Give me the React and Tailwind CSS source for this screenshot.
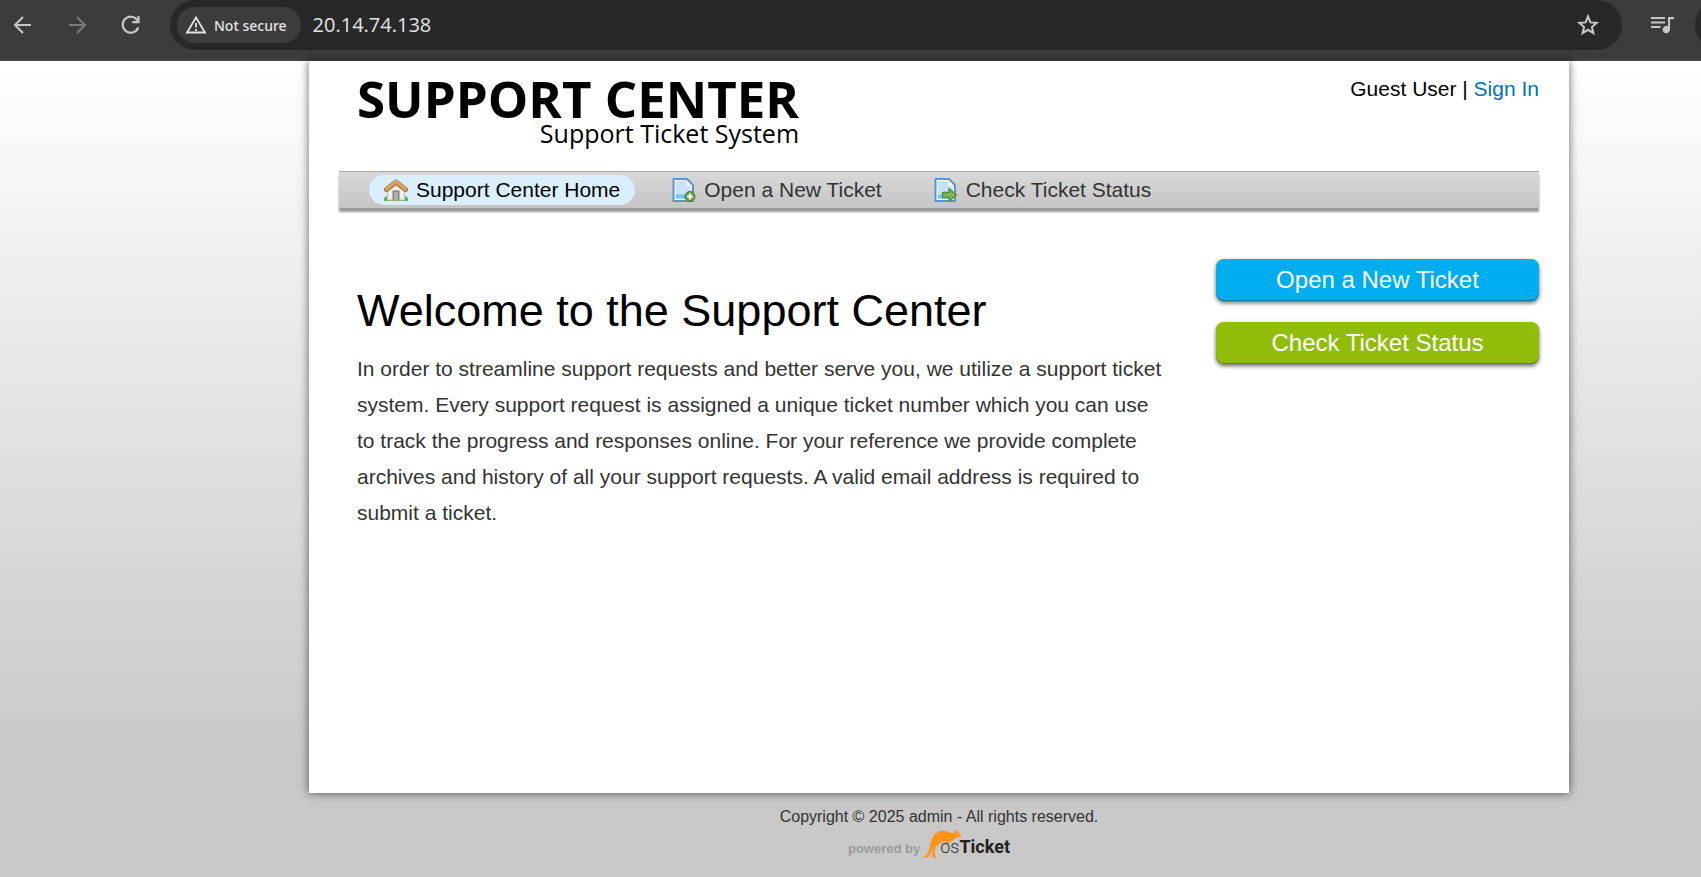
import React from "react";

function BackIcon({ flip }) {
  return (
    <svg width="20" height="20" viewBox="0 0 20 20" fill="none" stroke="currentColor" strokeWidth="2" className={flip ? "-scale-x-100" : ""}>
      <path d="M18 10H2M10 2L2 10l8 8" />
    </svg>
  );
}

function ReloadIcon() {
  return (
    <svg width="20" height="20" viewBox="0 0 20 20" fill="none" stroke="currentColor" strokeWidth="2.2">
      <path d="M16.500 5.500A8 8 0 1 0 17.200 12.500" />
      <path d="M17.500 1v6.200h-6.200" />
    </svg>
  );
}

function WarningIcon() {
  return (
    <svg width="22" height="20" viewBox="0 0 22 20" fill="none" stroke="currentColor" strokeWidth="1.800">
      <path d="M11 2.500L2 17.500h18z" />
      <path d="M11 8v4.500M11 14v2" />
    </svg>
  );
}

function StarIcon() {
  return (
    <svg width="24" height="24" viewBox="0 0 24 24" fill="none" stroke="currentColor" strokeWidth="2">
      <path d="M12 3.500l2.400 5.900 6.300.5-4.800 4.100 1.500 6.200-5.400-3.400-5.400 3.400 1.500-6.200-4.800-4.100 6.300-.5z" />
    </svg>
  );
}

function QueueIcon() {
  return (
    <svg width="24" height="18" viewBox="0 0 24 18" fill="currentColor">
      <path d="M0 1h14v2H0zM0 5.500h14v2H0zM0 10h9.500v2H0z" />
      <path d="M17 1h6v2.200h-4v10.300a3.700 3.700 0 1 1-2-3.200z" />
    </svg>
  );
}

function HomeIcon() {
  return (
    <svg width="24" height="24" viewBox="0 0 24 24">
      <path d="M0 20.500q2-4 6-2h12q4-2 6 2v2.500H0z" fill="#62ad58" />
      <path d="M3.500 12L12 4l8.500 8v10h-17z" fill="#f1ede7" stroke="#c9c1b6" />
      <path d="M8.500 12.500h7V22.500h-7z" fill="#858585" />
      <path d="M10 14h4v8.500h-4z" fill="#b0b0b0" />
      <path d="M2.500 11.500L12 4l9.500 7.500" fill="none" stroke="#a8763c" strokeWidth="5" strokeLinejoin="round" strokeLinecap="round" />
      <path d="M2.500 11L12 3.500l9.500 7.500" fill="none" stroke="#d9a566" strokeWidth="3.200" strokeLinejoin="round" strokeLinecap="round" />
    </svg>
  );
}

function PageShape() {
  return (
    <>
      <path d="M1.500 1h13.500l6 6v16H1.500z" fill="#fff" stroke="#5a93cf" strokeWidth="2" strokeLinejoin="round" />
      <path d="M3.500 3h11L19 8v13H3.500z" fill="#cbe1fa" />
      <path d="M14.500 2.500v5.500H20z" fill="#f6fbff" />
      <path d="M4 16.500h10v4H4z" fill="#72c4fa" />
    </>
  );
}

function NewTicketIcon() {
  return (
    <svg width="24" height="24" viewBox="0 0 24 24">
      <PageShape />
      <circle cx="18" cy="18.500" r="5" fill="#68a142" stroke="#447d25" />
      <path d="M18 15.500v6M15 18.500h6" stroke="#fff" strokeWidth="2.200" />
    </svg>
  );
}

function StatusIcon() {
  return (
    <svg width="24" height="24" viewBox="0 0 24 24">
      <PageShape />
      <path d="M8.500 14.500h6.500v-4l7.500 6.500-7.500 6.500v-4H8.500z" fill="#7fb558" stroke="#518f33" strokeWidth="1.300" strokeLinejoin="round" />
    </svg>
  );
}

function Kangaroo() {
  return (
    <svg width="40" height="30" viewBox="0 0 40 30" fill="#ff9419" className="absolute left-0 top-0">
      <path d="M.5 27.300C4.500 27.300 6 25 7 21 8.500 14.500 9.500 9 13 5 16.500 1.500 22 .8 26.500 3c2 1 4 1.300 5.800.5L33 2.800 33.200.8l1.500 1.400L35.500 0l.9 3.500 3 2.700-.7 1.600-4.200.6c-1.800 2-3.500 3-5.800 3.600L26.500 15l-3.200.2 1.700-2.500c-1.500.2-3 .1-4.500-.4-1.500 2.200-3.800 3-5.800 4.500-2 1.800-1.600 4.500-1.900 9.200l1.700 2.400-3.800.4c-1-3.500-.6-7 .3-11C9.600 22 8.500 28.500 3 28.700z" />
    </svg>
  );
}

const navItems = [
  { label: "Support Center Home", icon: HomeIcon, active: true },
  { label: "Open a New Ticket", icon: NewTicketIcon },
  { label: "Check Ticket Status", icon: StatusIcon },
];

function BrowserBar() {
  return (
    <div className="flex h-[61px] items-start overflow-hidden border-b border-[#4a4a4a] bg-[#3c3c3c] text-[#c7c7c7]">
      <div className="flex h-[50px] shrink-0 items-center gap-[34px] pl-[13px]">
        <button type="button" aria-label="Back"><BackIcon /></button>
        <button type="button" aria-label="Forward" className="text-[#7b7b7b]"><BackIcon flip /></button>
        <button type="button" aria-label="Reload"><ReloadIcon /></button>
      </div>
      <div className="ml-[29px] flex h-[50px] flex-1 items-center rounded-full bg-[#282828] pl-[7px] pr-[22px]">
        <button type="button" className="flex h-9 shrink-0 items-center gap-[7px] rounded-full bg-[#3c3c3c] pl-2 pr-[14px] font-['Noto_Sans',sans-serif] text-[14px] font-medium text-[#e3e3e3]">
          <WarningIcon />
          Not secure
        </button>
        <input
          type="text"
          aria-label="Address"
          defaultValue="20.14.74.138"
          className="ml-3 min-w-0 flex-1 bg-transparent font-['Open_Sans',sans-serif] text-[20px] text-[#e3e3e3] outline-none"
        />
        <button type="button" aria-label="Bookmark"><StarIcon /></button>
      </div>
      <div className="flex h-[50px] shrink-0 items-center pl-[29px]">
        <button type="button" aria-label="Media queue"><QueueIcon /></button>
      </div>
      <div className="-mr-11 ml-5 h-[50px] w-[50px] shrink-0 rounded-full bg-[#282828]" />
    </div>
  );
}

function App() {
  return (
    <div className="flex min-h-screen flex-col bg-[#c8c8c8] font-['Liberation_Sans',Arial,sans-serif]">
      <BrowserBar />
      <div className="flex-1 bg-linear-to-b from-white to-[#c8c8c8] to-[700px] pl-[309px]">
        <div className="flex min-h-[732px] max-w-[1260px] flex-col bg-white px-[30px] shadow-[0_0_9px_rgba(0,0,0,0.6)]">
          <header className="flex h-[110px] items-start justify-between">
            <a href="#" className="ml-[18px] mt-[10px] flex flex-col items-end font-['Open_Sans',sans-serif] text-black">
              <span className="text-[51px] font-bold leading-[54px]">SUPPORT CENTER</span>
              <span className="text-[25px] leading-4">Support Ticket System</span>
            </a>
            <p className="mt-4 text-[21px] leading-6 text-black">
              Guest User | <a href="#" className="text-[#0072bc]">Sign In</a>
            </p>
          </header>

          <nav className="flex h-[37px] items-center gap-[22px] border-t border-[#aaaaaa] bg-linear-to-b from-[#d8d8d8] to-[#c5c5c5] pl-[30px] shadow-[0_4px_2px_rgba(0,0,0,0.4)]">
            {navItems.map(({ label, icon: Icon, active }) => (
              <a
                key={label}
                href="#"
                className={`flex h-[30px] items-center gap-2 rounded-full px-[15px] text-[21px] ${active ? "bg-[#dbeefe] text-black" : "text-[#333333]"}`}
              >
                <Icon />
                {label}
              </a>
            ))}
          </nav>

          <main className="flex items-start justify-between pt-[51px]">
            <div className="w-[855px] pl-[18px] pt-7">
              <h1 className="text-[45px] leading-[48px] text-black">Welcome to the Support Center</h1>
              <p className="mt-4 max-w-[810px] text-[21px] leading-9 text-[#333333]">
                In order to streamline support requests and better serve you, we utilize a support ticket system. Every
                support request is assigned a unique ticket number which you can use to track the progress and responses
                online. For your reference we provide complete archives and history of all your support requests. A valid
                email address is required to submit a ticket.
              </p>
            </div>
            <div className="flex w-[323px] flex-col gap-[21px] text-[24px] text-white [text-shadow:0_1px_1px_rgba(0,0,0,0.25)]">
              <button type="button" className="h-[42px] rounded-lg bg-[#00aeef] shadow-[0_2px_4px_rgba(0,0,0,0.6),inset_0_-1px_0_rgba(0,0,0,0.3)]">
                Open a New Ticket
              </button>
              <button type="button" className="h-[42px] rounded-lg bg-[#90bd09] shadow-[0_2px_4px_rgba(0,0,0,0.6),inset_0_-1px_0_rgba(0,0,0,0.3)]">
                Check Ticket Status
              </button>
            </div>
          </main>
        </div>

        <footer className="flex max-w-[1260px] flex-col items-center pt-3 text-[16px] text-[#333333]">
          <p className="leading-6">Copyright © 2025 admin - All rights reserved.</p>
          <a href="#" className="mr-5 flex items-start">
            <span className="pt-[10px] text-[13px] font-bold leading-5 text-[#9b9b9b]">powered by</span>
            <span className="relative ml-[2px] h-[30px] pl-[18px] pt-[6px] font-['Roboto',sans-serif] text-[18px] leading-6">
              <Kangaroo />
              <span className="relative font-light">os</span>
              <b className="text-[#222222]">Ticket</b>
            </span>
          </a>
        </footer>
      </div>
    </div>
  );
}

export default App;
